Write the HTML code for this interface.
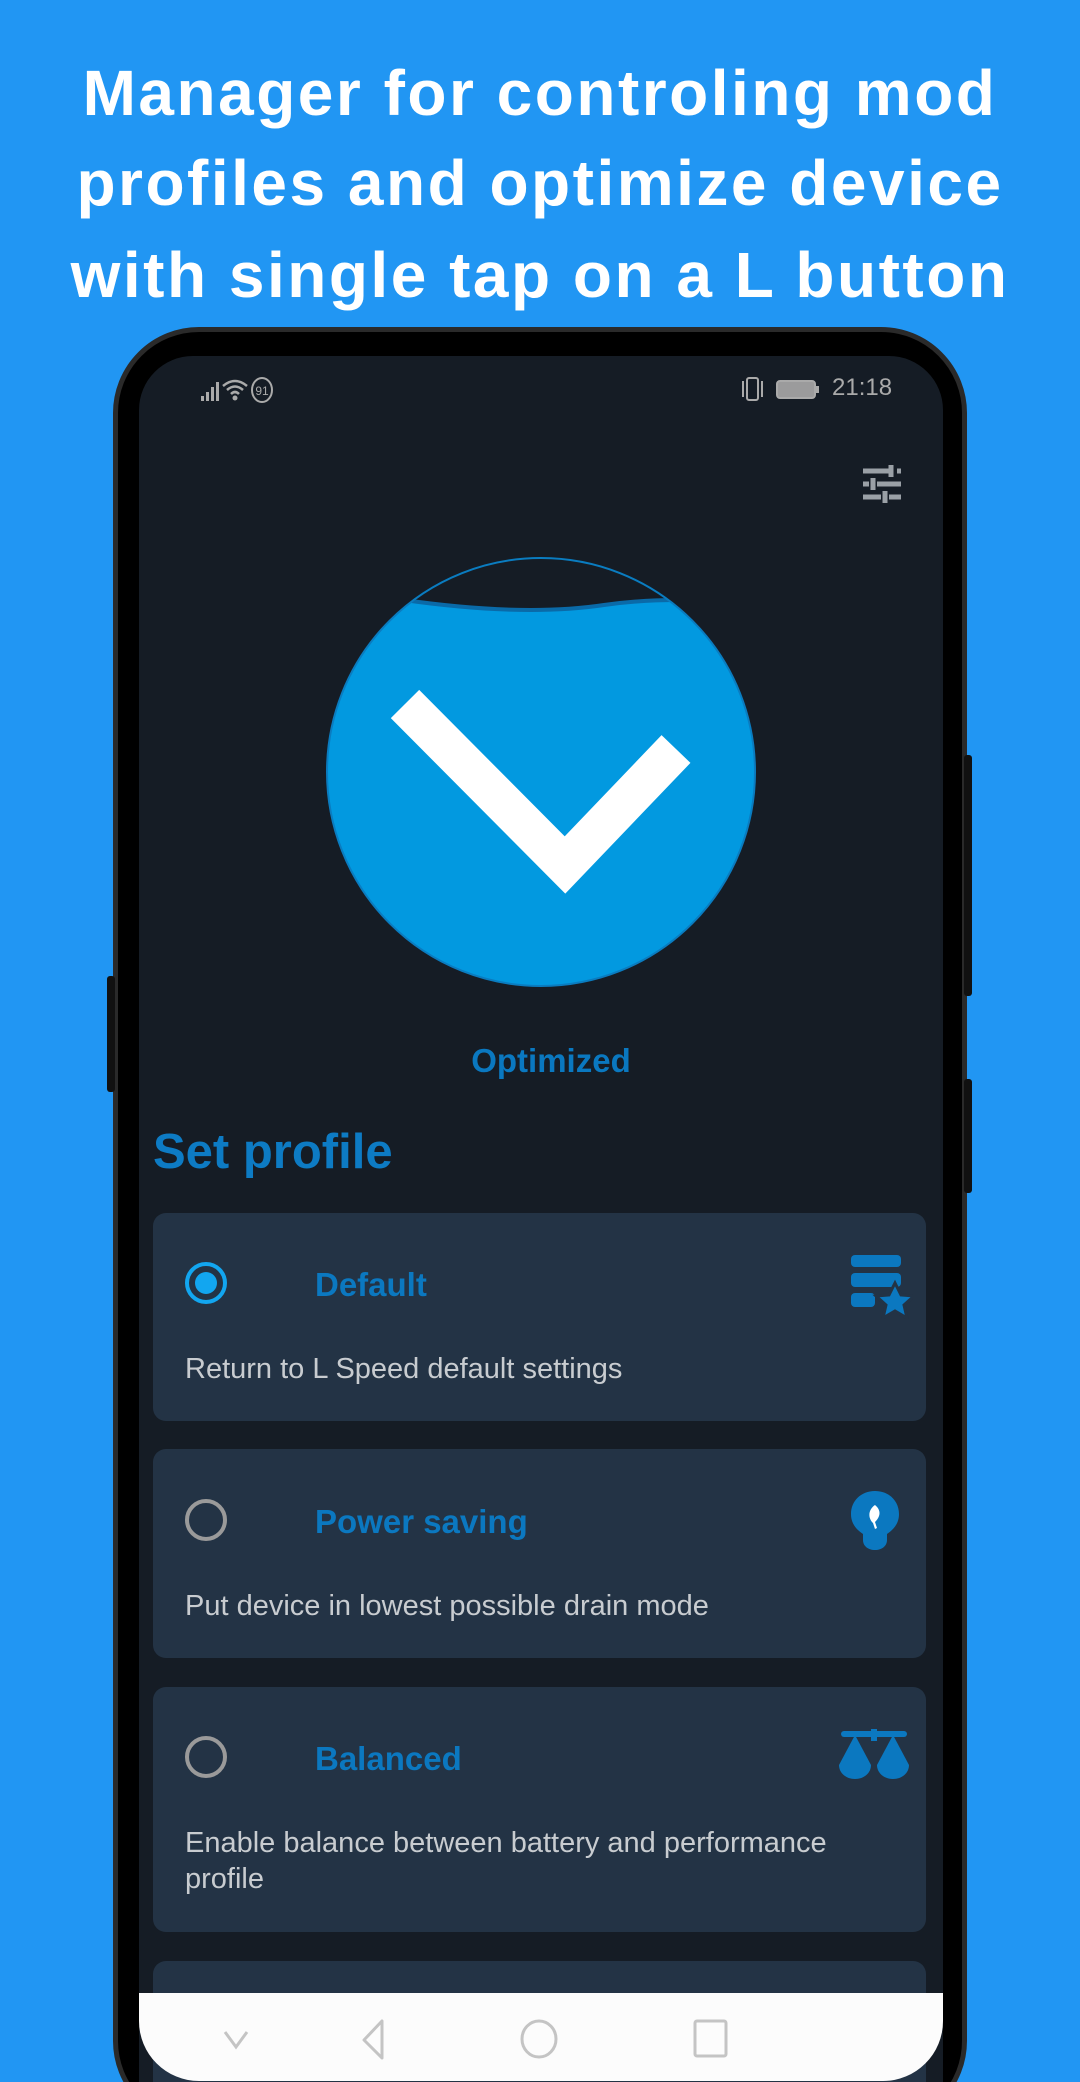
<!DOCTYPE html>
<html><head><meta charset="utf-8"><style>
*{margin:0;padding:0;box-sizing:border-box}
html,body{width:1080px;height:2082px;overflow:hidden}
body{background:#2196F3;position:relative;font-family:"Liberation Sans",sans-serif}
.t{position:absolute;left:0;width:1080px;text-align:center;color:#fff;font-size:64px;font-weight:bold;letter-spacing:2.5px}
.phone{position:absolute;left:113px;top:327px;width:854px;height:1800px;background:#000;border-radius:86px;border:5px solid #2a2a2a}
.btn{position:absolute;background:#111;border-radius:3px;width:8px}
.screen{position:absolute;left:139px;top:356px;width:804px;height:1726px;background:#151c25;border-radius:54px 54px 0 0;overflow:hidden}
.nav{position:absolute;left:139px;top:1993px;width:804px;height:88px;background:#fcfcfc;border-radius:0 0 60px 60px}
.card{position:absolute;left:14px;width:773px;background:#233345;border-radius:13px}
.card .rt{position:absolute;left:162px;font-size:33px;font-weight:bold;color:#0b78c0}
.card .ds{position:absolute;left:32px;font-size:29px;color:#c8ccd0;line-height:36px;width:720px}
.radio{position:absolute;left:32px;width:42px;height:42px;border-radius:50%;border:4px solid #9a9a9a}
.st{position:absolute;color:#aaa;font-size:24px}
</style></head><body>
<div class="t" style="top:56px">Manager for controling mod</div>
<div class="t" style="top:146px">profiles and optimize device</div>
<div class="t" style="top:238px">with single tap on a L button</div>
<div class="phone"></div>
<div class="btn" style="left:964px;top:755px;height:241px"></div>
<div class="btn" style="left:964px;top:1079px;height:114px"></div>
<div class="btn" style="left:107px;top:976px;height:116px"></div>
<div class="screen">
 <svg style="position:absolute;left:62px;top:20px" width="90" height="28" viewBox="0 0 90 28">
  <rect x="0" y="20" width="3" height="5" fill="#aaa"/><rect x="5" y="16" width="3" height="9" fill="#aaa"/><rect x="10" y="11" width="3" height="14" fill="#aaa"/><rect x="15" y="6" width="3" height="19" fill="#aaa"/>
  <path d="M22 10 Q34 0 46 10 M26 14 Q34 7 42 14 M30 18 Q34 14 38 18" stroke="#aaa" stroke-width="2.5" fill="none"/><circle cx="34" cy="22" r="2.5" fill="#aaa"/>
  <ellipse cx="61" cy="14" rx="10" ry="12" stroke="#aaa" stroke-width="2" fill="none"/><text x="61" y="19" font-size="12" fill="#aaa" text-anchor="middle" font-family="Liberation Sans">91</text>
 </svg>
 <svg style="position:absolute;left:600px;top:20px" width="90" height="28" viewBox="0 0 90 28">
  <rect x="8" y="2" width="11" height="22" rx="2" stroke="#aaa" stroke-width="2" fill="none"/>
  <path d="M4 5v16M23 5v16" stroke="#aaa" stroke-width="2"/>
  <rect x="38" y="5" width="38" height="17" rx="3" stroke="#aaa" stroke-width="2" fill="#aaa" fill-opacity=".9"/><rect x="77" y="10" width="3" height="7" fill="#aaa"/>
 </svg>
 <div class="st" style="left:693px;top:18px">21:18</div>
 <svg style="position:absolute;left:722px;top:107px" width="42" height="42" viewBox="0 0 42 42" stroke="#9aa0a6" stroke-width="5">
  <path d="M2 8h26M36 8h4M30 2v12M2 21h6M16 21h24M12 15v12M2 34h18M28 34h12M24 28v12"/>
 </svg>
 <svg style="position:absolute;left:185px;top:199px" width="434" height="434" viewBox="0 0 434 434">
  <defs><clipPath id="c"><circle cx="217" cy="217" r="214"/></clipPath></defs>
  <circle cx="217" cy="217" r="214" fill="#0299e0"/>
  <path clip-path="url(#c)" d="M0 0H434V50 Q350 40 280 50 Q200 62 80 45 L0 40Z" fill="#151c25"/>
  <path clip-path="url(#c)" d="M80 45 Q200 62 280 50 Q350 40 434 50" stroke="#0a6aa8" stroke-width="4" fill="none"/>
  <circle cx="217" cy="217" r="214" fill="none" stroke="#0a7cc0" stroke-width="2"/>
  <path d="M81 149L241 310L352 194" stroke="#fff" stroke-width="40" fill="none"/>
 </svg>
 <div style="position:absolute;left:0;width:824px;top:686px;text-align:center;font-size:33px;font-weight:bold;color:#0a78c0">Optimized</div>
 <div style="position:absolute;left:14px;top:768px;font-size:49px;font-weight:bold;color:#0d7bc4">Set profile</div>
 <div class="card" style="top:857px;height:208px">
  <div class="radio" style="top:49px;border-color:#12a6f0"><div style="margin:6px;width:22px;height:22px;border-radius:50%;background:#12a6f0"></div></div>
  <div class="rt" style="top:53px">Default</div>
  <div class="ds" style="top:138px">Return to L Speed default settings</div>
  <svg style="position:absolute;left:696px;top:40px" width="64" height="66" viewBox="0 0 64 66" fill="#0b78c0">
   <rect x="2" y="2" width="50" height="12" rx="4"/><rect x="2" y="20" width="50" height="14" rx="4"/><rect x="2" y="40" width="24" height="14" rx="4"/>
   <path d="M46 30l6 12 13 1-10 9 3 13-12-7-12 7 3-13-10-9 13-1z" stroke="#233345" stroke-width="3"/>
  </svg>
 </div>
 <div class="card" style="top:1093px;height:209px">
  <div class="radio" style="top:50px"></div>
  <div class="rt" style="top:54px">Power saving</div>
  <div class="ds" style="top:139px">Put device in lowest possible drain mode</div>
  <svg style="position:absolute;left:696px;top:40px" width="52" height="62" viewBox="0 0 52 62">
   <path d="M26 2C12 2 2 12 2 25c0 10 6 16 12 20v6c0 6 5 10 12 10s12-4 12-10v-6c6-4 12-10 12-20C50 12 40 2 26 2z" fill="#0b78c0"/>
   <path d="M26 16c-6 4-8 12-2 18l2 6 2-1-2-6c6-6 6-12 0-17z" fill="#fff"/>
  </svg>
 </div>
 <div class="card" style="top:1331px;height:245px">
  <div class="radio" style="top:49px"></div>
  <div class="rt" style="top:53px">Balanced</div>
  <div class="ds" style="top:138px">Enable balance between battery and performance profile</div>
  <svg style="position:absolute;left:684px;top:42px" width="74" height="52" viewBox="0 0 74 52" fill="#0b78c0">
   <rect x="4" y="2" width="66" height="6" rx="3"/><rect x="34" y="0" width="6" height="12"/>
   <path d="M18 6L2 36c0 8 7 14 16 14s16-6 16-14z"/><path d="M56 6L40 36c0 8 7 14 16 14s16-6 16-14z"/>
  </svg>
 </div>
 <div class="card" style="top:1605px;height:200px"></div>
</div>
<div class="nav">
 <svg style="position:absolute;left:0;top:0" width="804" height="88" viewBox="0 0 804 88" fill="none" stroke="#c4c4c4" stroke-width="3">
  <path d="M86 39l11 15 11-15"/>
  <path d="M243 28v37l-18-18z" stroke-linejoin="round"/>
  <ellipse cx="400" cy="46" rx="17" ry="18"/>
  <rect x="556" y="28" width="31" height="35" rx="2"/>
 </svg>
</div>
</body></html>
